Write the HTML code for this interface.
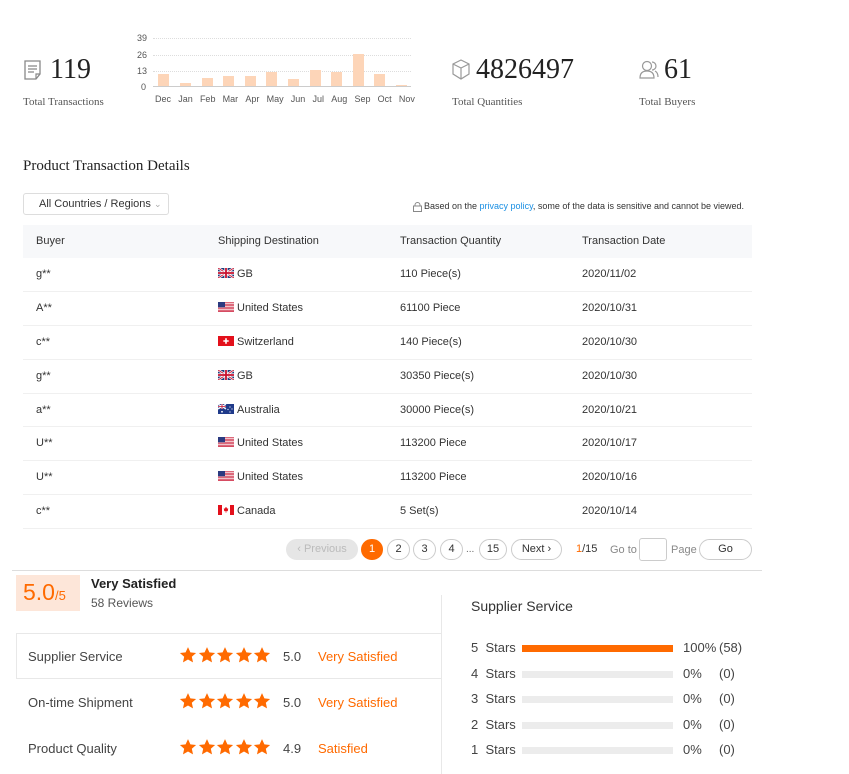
<!DOCTYPE html>
<html><head><meta charset="utf-8">
<style>
*{margin:0;padding:0;box-sizing:border-box}
body{width:849px;height:774px;background:#fff;position:relative;overflow:hidden;font-family:"Liberation Sans",Arial,sans-serif;color:#333}
.a{position:absolute;white-space:nowrap}
.serif{font-family:"Liberation Serif",serif}
.big{font-size:28px;color:#222}
.lbl{font-size:11px;color:#555}
.ax{font-size:9px;color:#555}
.bar{position:absolute;background:#fdd5b8;width:11px}
.t{font-size:11px;color:#333}
.row{position:absolute;left:23px;width:729px;height:34px;border-bottom:1px solid #f0f0f0}
.flag{display:inline-block;width:16px;height:10px;vertical-align:-1px;margin-right:3px}
.pg{position:absolute;top:539px;height:21px;border:1px solid #ccc;border-radius:11px;font-size:11px;text-align:center;line-height:19px;color:#333;background:#fff}
.star{display:inline-block;width:18px;height:18px;margin-right:0.5px}
.sl{font-size:13px;color:#444}
.bg{position:absolute;left:522px;width:151px;height:7px;background:#ececec}
</style></head><body>
<svg class="a" style="left:23px;top:59px" width="20" height="22" viewBox="0 0 20 22"><path d="M2 2h15v13l-4 5H2z" fill="none" stroke="#888" stroke-width="1.3"/><path d="M5 7h9M5 10h9M5 13h6" stroke="#888" stroke-width="1.2"/><path d="M17 15h-4v5" fill="none" stroke="#888" stroke-width="1.2"/></svg>
<div class="a serif big" style="left:50px;top:54px">119</div>
<div class="a serif lbl" style="left:23px;top:96px">Total Transactions</div>

<div class="a ax" style="left:137px;top:33px">39</div>
<div class="a ax" style="left:137px;top:50px">26</div>
<div class="a ax" style="left:137px;top:66px">13</div>
<div class="a ax" style="left:141px;top:82px">0</div>
<div class="a" style="left:153px;top:38px;width:258px;border-top:1px dotted #ddd"></div>
<div class="a" style="left:153px;top:55px;width:258px;border-top:1px dotted #ddd"></div>
<div class="a" style="left:153px;top:71px;width:258px;border-top:1px dotted #ddd"></div>
<div class="a" style="left:153px;top:86px;width:258px;border-top:1px solid #ccc"></div>
<div class="bar" style="left:158px;top:74px;height:12px"></div>
<div class="bar" style="left:180px;top:83px;height:3px"></div>
<div class="bar" style="left:202px;top:78px;height:8px"></div>
<div class="bar" style="left:223px;top:76px;height:10px"></div>
<div class="bar" style="left:245px;top:76px;height:10px"></div>
<div class="bar" style="left:266px;top:72px;height:14px"></div>
<div class="bar" style="left:288px;top:79px;height:7px"></div>
<div class="bar" style="left:310px;top:70px;height:16px"></div>
<div class="bar" style="left:331px;top:72px;height:14px"></div>
<div class="bar" style="left:353px;top:54px;height:32px"></div>
<div class="bar" style="left:374px;top:74px;height:12px"></div>
<div class="bar" style="left:396px;top:85px;height:1px"></div>
<div class="a ax" style="left:155px;top:94px;width:260px;display:flex;justify-content:space-between"><span>Dec</span><span>Jan</span><span>Feb</span><span>Mar</span><span>Apr</span><span>May</span><span>Jun</span><span>Jul</span><span>Aug</span><span>Sep</span><span>Oct</span><span>Nov</span></div>

<svg class="a" style="left:451px;top:59px" width="20" height="21" viewBox="0 0 20 21"><path d="M10 1l8 4v10l-8 5-8-5V5z M2 5l8 4 8-4 M10 9v11" fill="none" stroke="#999" stroke-width="1.2"/></svg>
<div class="a serif big" style="left:476px;top:54px">4826497</div>
<div class="a serif lbl" style="left:452px;top:96px">Total Quantities</div>
<svg class="a" style="left:639px;top:60px" width="20" height="19" viewBox="0 0 20 19"><circle cx="8" cy="6" r="4.5" fill="none" stroke="#999" stroke-width="1.2"/><path d="M1 18c0-5 3-7 7-7s7 2 7 7z" fill="none" stroke="#999" stroke-width="1.2"/><path d="M13 2a4 4 0 0 1 0 8M16 11c2 1 3 3 3 6" fill="none" stroke="#999" stroke-width="1.2"/></svg>
<div class="a serif big" style="left:664px;top:54px">61</div>
<div class="a serif lbl" style="left:639px;top:96px">Total Buyers</div>

<div class="a serif" style="left:23px;top:158px;font-size:15px;color:#222">Product Transaction Details</div>

<div class="a" style="left:23px;top:193px;width:146px;height:22px;border:1px solid #ddd;border-radius:3px;font-size:11px;line-height:20px;padding-left:15px;color:#333">All Countries / Regions <span style="color:#aaa;font-size:9px">&#8964;</span></div>
<svg class="a" style="left:413px;top:202px" width="9" height="10" viewBox="0 0 9 10"><path d="M2 4V3a2.5 2.5 0 0 1 5 0v1" fill="none" stroke="#888"/><rect x="0.5" y="4" width="8" height="5.5" fill="none" stroke="#888"/></svg>
<div class="a" style="left:424px;top:201px;font-size:9px;color:#333">Based on the <span style="color:#1a8fe3">privacy policy</span>, some of the data is sensitive and cannot be viewed.</div>

<div class="a" style="left:23px;top:225px;width:729px;height:33px;background:#f7f8fa"></div>
<div class="a t" style="left:36px;top:235px">Buyer</div>
<div class="a t" style="left:218px;top:235px">Shipping Destination</div>
<div class="a t" style="left:400px;top:235px">Transaction Quantity</div>
<div class="a t" style="left:582px;top:235px">Transaction Date</div>

<svg width="0" height="0" style="position:absolute"><defs>
<symbol id="gb" viewBox="0 0 16 10"><rect width="16" height="10" fill="#1f3a7a"/><path d="M0 0L16 10M16 0L0 10" stroke="#fff" stroke-width="2.4"/><path d="M0 0L16 10M16 0L0 10" stroke="#c8102e" stroke-width="0.9"/><path d="M8 0v10M0 5h16" stroke="#fff" stroke-width="3.2"/><path d="M8 0v10M0 5h16" stroke="#c8102e" stroke-width="1.8"/></symbol>
<symbol id="us" viewBox="0 0 16 10"><rect width="16" height="10" fill="#fff"/><path d="M0 .75h16M0 2.25h16M0 3.75h16M0 5.25h16M0 6.75h16M0 8.25h16M0 9.6h16" stroke="#c8102e" stroke-width=".8"/><rect width="7" height="5.3" fill="#2b3a80"/></symbol>
<symbol id="ch" viewBox="0 0 16 10"><rect width="16" height="10" fill="#e3101b"/><path d="M8 2.3v5.4M5.3 5h5.4" stroke="#fff" stroke-width="1.6"/></symbol>
<symbol id="au" viewBox="0 0 16 10"><rect width="16" height="10" fill="#1f3a8a"/><path d="M0 0L8 5M8 0L0 5" stroke="#fff" stroke-width="1.2"/><path d="M4 0v5M0 2.5h8" stroke="#fff" stroke-width="1.6"/><path d="M4 0v5M0 2.5h8" stroke="#c8102e" stroke-width=".8"/><circle cx="12" cy="3" r=".6" fill="#fff"/><circle cx="12" cy="8" r=".6" fill="#fff"/><circle cx="10" cy="5.5" r=".6" fill="#fff"/><circle cx="14" cy="5" r=".6" fill="#fff"/><circle cx="4" cy="7.8" r=".9" fill="#fff"/></symbol>
<symbol id="ca" viewBox="0 0 16 10"><rect width="16" height="10" fill="#fff"/><rect width="4" height="10" fill="#e3101b"/><rect x="12" width="4" height="10" fill="#e3101b"/><path d="M8 2l1 2 1-.5-.5 2.5h-3L6 3.5l1 .5z M8 6v2" fill="#e3101b" stroke="#e3101b" stroke-width=".5"/></symbol>
<symbol id="st" viewBox="0 0 24 24"><path d="M12 1.5l3.2 7 7.6.8-5.7 5.1 1.6 7.5L12 18l-6.7 3.9 1.6-7.5L1.2 9.3l7.6-.8z" fill="#ff6a00"/></symbol>
</defs></svg>

<div class="row" style="top:258px"></div><div class="row" style="top:292px"></div><div class="row" style="top:326px"></div><div class="row" style="top:360px"></div><div class="row" style="top:393px"></div><div class="row" style="top:427px"></div><div class="row" style="top:461px"></div><div class="row" style="top:495px"></div>

<div class="a t" style="left:36px;top:268px">g**</div><div class="a t" style="left:218px;top:268px"><svg class="flag"><use href="#gb"/></svg>GB</div><div class="a t" style="left:400px;top:268px">110 Piece(s)</div><div class="a t" style="left:582px;top:268px">2020/11/02</div>
<div class="a t" style="left:36px;top:302px">A**</div><div class="a t" style="left:218px;top:302px"><svg class="flag"><use href="#us"/></svg>United States</div><div class="a t" style="left:400px;top:302px">61100 Piece</div><div class="a t" style="left:582px;top:302px">2020/10/31</div>
<div class="a t" style="left:36px;top:336px">c**</div><div class="a t" style="left:218px;top:336px"><svg class="flag"><use href="#ch"/></svg>Switzerland</div><div class="a t" style="left:400px;top:336px">140 Piece(s)</div><div class="a t" style="left:582px;top:336px">2020/10/30</div>
<div class="a t" style="left:36px;top:370px">g**</div><div class="a t" style="left:218px;top:370px"><svg class="flag"><use href="#gb"/></svg>GB</div><div class="a t" style="left:400px;top:370px">30350 Piece(s)</div><div class="a t" style="left:582px;top:370px">2020/10/30</div>
<div class="a t" style="left:36px;top:404px">a**</div><div class="a t" style="left:218px;top:404px"><svg class="flag"><use href="#au"/></svg>Australia</div><div class="a t" style="left:400px;top:404px">30000 Piece(s)</div><div class="a t" style="left:582px;top:404px">2020/10/21</div>
<div class="a t" style="left:36px;top:437px">U**</div><div class="a t" style="left:218px;top:437px"><svg class="flag"><use href="#us"/></svg>United States</div><div class="a t" style="left:400px;top:437px">113200 Piece</div><div class="a t" style="left:582px;top:437px">2020/10/17</div>
<div class="a t" style="left:36px;top:471px">U**</div><div class="a t" style="left:218px;top:471px"><svg class="flag"><use href="#us"/></svg>United States</div><div class="a t" style="left:400px;top:471px">113200 Piece</div><div class="a t" style="left:582px;top:471px">2020/10/16</div>
<div class="a t" style="left:36px;top:505px">c**</div><div class="a t" style="left:218px;top:505px"><svg class="flag"><use href="#ca"/></svg>Canada</div><div class="a t" style="left:400px;top:505px">5 Set(s)</div><div class="a t" style="left:582px;top:505px">2020/10/14</div>

<div class="pg" style="left:286px;width:72px;background:#e6e6e6;border-color:#e6e6e6;color:#bbb">&lsaquo; Previous</div>
<div class="pg" style="left:361px;width:22px;background:#ff6a00;border-color:#ff6a00;color:#fff">1</div>
<div class="pg" style="left:387px;width:23px">2</div>
<div class="pg" style="left:413px;width:23px">3</div>
<div class="pg" style="left:440px;width:23px">4</div>
<div class="a" style="left:466px;top:544px;font-size:10px;color:#666">...</div>
<div class="pg" style="left:479px;width:28px">15</div>
<div class="pg" style="left:511px;width:51px">Next &rsaquo;</div>
<div class="a" style="left:576px;top:543px;font-size:11px;color:#333"><span style="color:#ff6a00">1</span>/15</div>
<div class="a" style="left:610px;top:544px;font-size:11px;color:#888">Go to</div>
<div class="a" style="left:639px;top:538px;width:28px;height:23px;border:1px solid #ccc;border-radius:3px"></div>
<div class="a" style="left:671px;top:544px;font-size:11px;color:#888">Page</div>
<div class="pg" style="left:699px;width:53px">Go</div>
<div class="a" style="left:12px;top:570px;width:750px;border-top:1px solid #ddd"></div>

<div class="a" style="left:16px;top:575px;width:64px;height:36px;background:#fde6d9"></div>
<div class="a" style="left:23px;top:579px;font-size:23px;color:#ff6a00">5.0<span style="font-size:13px">/5</span></div>
<div class="a" style="left:91px;top:576px;font-size:13px;font-weight:bold;color:#222">Very Satisfied</div>
<div class="a" style="left:91px;top:596px;font-size:12px;color:#555">58 Reviews</div>
<div class="a" style="left:441px;top:595px;height:179px;border-left:1px solid #e8e8e8"></div>
<div class="a" style="left:16px;top:633px;width:425px;height:46px;border:1px solid #e8e8e8;border-right:none"></div>

<div class="a sl" style="left:28px;top:649px">Supplier Service</div>
<div class="a sl" style="left:28px;top:695px">On-time Shipment</div>
<div class="a sl" style="left:28px;top:741px">Product Quality</div>
<div class="a" style="left:179px;top:646px"><svg class="star"><use href="#st"/></svg><svg class="star"><use href="#st"/></svg><svg class="star"><use href="#st"/></svg><svg class="star"><use href="#st"/></svg><svg class="star"><use href="#st"/></svg></div>
<div class="a" style="left:179px;top:692px"><svg class="star"><use href="#st"/></svg><svg class="star"><use href="#st"/></svg><svg class="star"><use href="#st"/></svg><svg class="star"><use href="#st"/></svg><svg class="star"><use href="#st"/></svg></div>
<div class="a" style="left:179px;top:738px"><svg class="star"><use href="#st"/></svg><svg class="star"><use href="#st"/></svg><svg class="star"><use href="#st"/></svg><svg class="star"><use href="#st"/></svg><svg class="star"><use href="#st"/></svg></div>
<div class="a sl" style="left:283px;top:649px">5.0</div><div class="a sl" style="left:318px;top:649px;color:#ff6a00">Very Satisfied</div>
<div class="a sl" style="left:283px;top:695px">5.0</div><div class="a sl" style="left:318px;top:695px;color:#ff6a00">Very Satisfied</div>
<div class="a sl" style="left:283px;top:741px">4.9</div><div class="a sl" style="left:318px;top:741px;color:#ff6a00">Satisfied</div>

<div class="a" style="left:471px;top:598px;font-size:14px;color:#333">Supplier Service</div>
<div class="a sl" style="left:471px;top:640px">5&nbsp; Stars</div><div class="bg" style="top:645px;background:#ff6a00"></div><div class="a sl" style="left:683px;top:640px">100%</div><div class="a sl" style="left:719px;top:640px">(58)</div>
<div class="a sl" style="left:471px;top:666px">4&nbsp; Stars</div><div class="bg" style="top:671px"></div><div class="a sl" style="left:683px;top:666px">0%</div><div class="a sl" style="left:719px;top:666px">(0)</div>
<div class="a sl" style="left:471px;top:691px">3&nbsp; Stars</div><div class="bg" style="top:696px"></div><div class="a sl" style="left:683px;top:691px">0%</div><div class="a sl" style="left:719px;top:691px">(0)</div>
<div class="a sl" style="left:471px;top:717px">2&nbsp; Stars</div><div class="bg" style="top:722px"></div><div class="a sl" style="left:683px;top:717px">0%</div><div class="a sl" style="left:719px;top:717px">(0)</div>
<div class="a sl" style="left:471px;top:742px">1&nbsp; Stars</div><div class="bg" style="top:747px"></div><div class="a sl" style="left:683px;top:742px">0%</div><div class="a sl" style="left:719px;top:742px">(0)</div>
</body></html>
